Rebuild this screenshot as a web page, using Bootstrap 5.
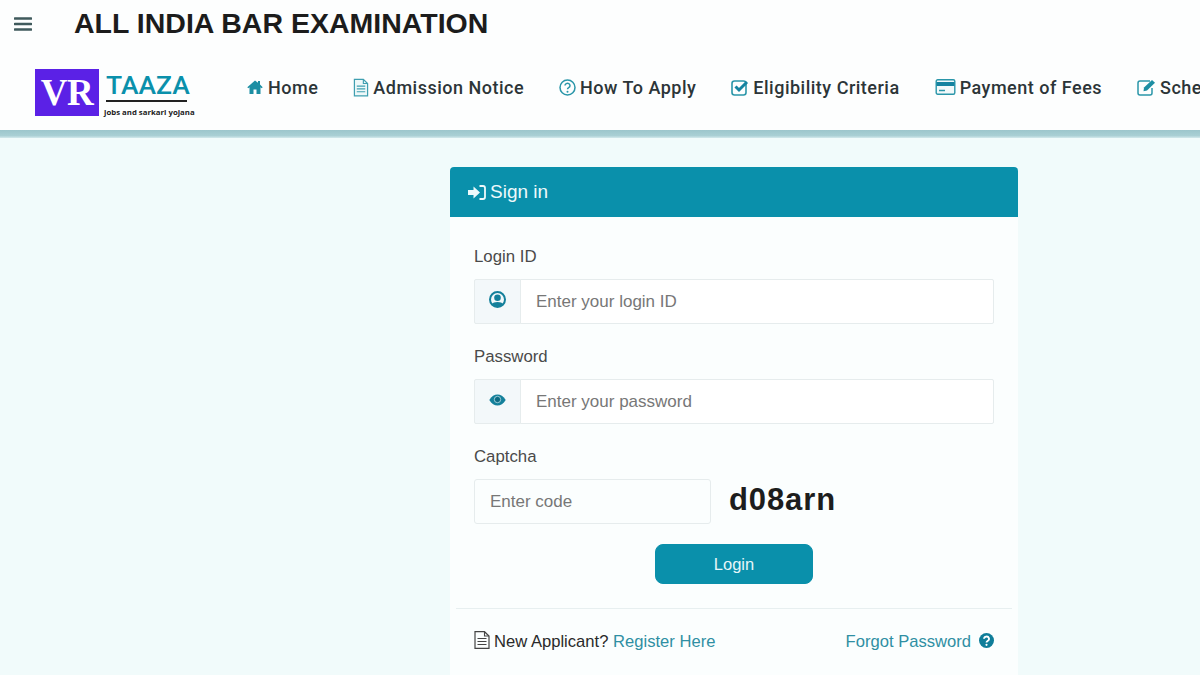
<!DOCTYPE html>
<html lang="en">
<head>
  <meta charset="UTF-8">
  <title>All India Bar Examination</title>
  <link href="https://cdn.jsdelivr.net/npm/bootstrap@5.3.3/dist/css/bootstrap.min.css" rel="stylesheet">
  <style>
    html, body { height: 675px; overflow: hidden; }
    body { background: #f1fbfb; font-family: "Liberation Sans", Arial, sans-serif; color: #444; }
    .top-strip { height: 60px; background: #fdfefe; padding-left: 14px; padding-bottom: 13px; }
    .menu-btn { width: 18px; margin-right: 42px; }
    .exam-title { font-size: 28.5px; font-weight: 700; color: #1c1c1c; margin: 0; line-height: 1; }
    .main-bar { height: 70px; background: #fdfefe; padding-left: 35px; white-space: nowrap; overflow: hidden; }
    .bar-edge { height: 8px; background: linear-gradient(#9cc6cc, #a9cfd4 70%, #d3e9ec); }
    .logo-box { width: 64px; height: 47px; background: #5b21e6; color: #fff; font-family: "Liberation Serif", serif; font-weight: 700; font-size: 37px; line-height: 47px; text-align: center; margin-bottom: 5px; letter-spacing: -.5px; }
    .logo-side { width: 148px; padding-left: 7px; }
    .logo-name { font-family: Roboto, sans-serif; font-size: 26.5px; font-weight: 500; color: #0a90ab; line-height: 26px; border-bottom: 2px solid #222; width: 81px; padding-bottom: 2px; }
    .logo-tag { font-family: "Open Sans", sans-serif; font-size: 7.8px; font-weight: 700; color: #222; margin-left: -2px; line-height: 12px; margin-top: 4px; }
    .main-links { gap: 35px; padding-bottom: 16px; }
    .main-item { font-family: Roboto, sans-serif; font-size: 18px; font-weight: 500; letter-spacing: .5px; color: #2c3538; text-decoration: none; flex: none; }
    .main-item svg { flex: none; }
    .home-icon { margin-right: 5px; }
    .signin-wrap { padding-left: 450px; padding-top: 29px; }
    .signin-box { width: 568px; height: 508px; overflow: hidden; background: #fbfefe; }
    .signin-head { height: 50px; background: #0a90ab; color: #eef9fb; font-size: 19px; padding-left: 18px; border-radius: 4px 4px 0 0; }
    .signin-body { padding: 29px 24px 0; }
    .field-label { font-size: 16.8px; line-height: 22px; color: #4a4a4a; margin-bottom: 11px; }
    .field-row { height: 45px; margin-bottom: 22px; }
    .field-row .input-group-text { width: 47px; justify-content: center; background: #f3f8fa; border-color: #e6eced; padding: 0; border-radius: 2px 0 0 2px; }
    .field-row .form-control, .code-input { font-size: 17px; color: #666; background: #fff; border-color: #e6eced; padding-left: 15px; box-shadow: none; }
    .field-row .form-control { border-radius: 0 2px 2px 0; }
    .form-control::placeholder { color: #777; opacity: 1; }
    .code-input { width: 237px; height: 45px; flex: none; border-radius: 3px; background: #fbfefe; }
    .code-text { font-size: 31px; line-height: 1; font-weight: 700; color: #1d1d1d; margin-left: 18px; letter-spacing: .9px; margin-bottom: 5px; }
    .login-btn { width: 158px; height: 40px; background: #0a90ab; border-color: #0a90ab; color: #e6f6f9; font-size: 16.5px; border-radius: 8px; margin-top: 20px; padding: 0; }
    .login-btn:hover { background: #0a90ab; border-color: #0a90ab; color: #e6f6f9; }
    .split-line { margin: 24px -18px 0; border-top: 1px solid #e7eff0; opacity: 1; }
    .foot-row { font-size: 16.6px; padding-top: 21px; }
    .foot-row a { color: #2f8fa3; text-decoration: none; }
    .new-text { color: #2a2a2a; }
  </style>
</head>
<body>
  <!-- top strip -->
  <div class="top-strip d-flex align-items-center">
    <svg class="menu-btn" height="16" viewBox="0 0 18 16"><path d="M1 2.5h16M1 8h16M1 13.5h16" stroke="#3f5a5c" stroke-width="2.6" stroke-linecap="round" fill="none"/></svg>
    <h1 class="exam-title">ALL INDIA BAR EXAMINATION</h1>
  </div>

  <!-- main menu -->
  <div class="main-bar d-flex align-items-center">
    <div class="logo-box flex-shrink-0">VR</div>
    <div class="logo-side flex-shrink-0">
      <div class="logo-name">TAAZA</div>
      <div class="logo-tag">jobs and sarkari yojana</div>
    </div>
    <div class="main-links d-flex align-items-center flex-shrink-0">
      <a class="main-item d-flex align-items-center" href="#">
        <svg width="16" height="14" viewBox="0 0 16 14" class="home-icon"><path d="M8 0.5 0.3 7.2l1 1L2.500 7.300V14h4V9.500h3V14h4V7.300l1.200.9 1-1L13 4.600V1h-2v1.800z" fill="#1c8ea3"/></svg>Home
      </a>
      <a class="main-item d-flex align-items-center" href="#">
        <svg width="16" height="19" viewBox="0 0 17 19" class="me-1"><path d="M1.500.8h9.500l4.500 4.500v13H1.500z" fill="#eef8f9" stroke="#3f9fb0" stroke-width="1.300"/><path d="M11 .8v4.500h4.500M4 8h9M4 11h9M4 14h9" stroke="#3f9fb0" stroke-width="1.200" fill="none"/></svg>Admission Notice
      </a>
      <a class="main-item d-flex align-items-center" href="#">
        <svg width="17" height="17" viewBox="0 0 17 17" class="me-1"><circle cx="8.500" cy="8.500" r="7.500" fill="none" stroke="#2a96a9" stroke-width="1.500"/><path d="M6 6.500a2.500 2.300 0 1 1 3.700 2.100c-.9.500-1.200.9-1.200 1.700" fill="none" stroke="#2a96a9" stroke-width="1.500"/><circle cx="8.500" cy="12.700" r="1" fill="#2a96a9"/></svg>How To Apply
      </a>
      <a class="main-item d-flex align-items-center" href="#">
        <svg width="18" height="17" viewBox="0 0 18 17" class="me-1"><rect x="1" y="2" width="14" height="14" rx="2.500" fill="none" stroke="#2a96a9" stroke-width="1.600"/><path d="M4.500 7.500 8 11l8-8" fill="none" stroke="#1583a0" stroke-width="3"/></svg>Eligibility Criteria
      </a>
      <a class="main-item d-flex align-items-center" href="#">
        <svg width="21" height="16" viewBox="0 0 20 16" class="me-1"><rect x=".7" y=".7" width="18.600" height="14.600" rx="1.500" fill="#f2f9fa" stroke="#2a96a9" stroke-width="1.400"/><rect x="1" y="3" width="18" height="4" fill="#1583a0"/><path d="M3.500 11.500h6" stroke="#2a96a9" stroke-width="1.500"/></svg>Payment of Fees
      </a>
      <a class="main-item d-flex align-items-center" href="#">
        <svg width="19" height="17" viewBox="0 0 19 17" class="me-1"><path d="M13 2H3a2 2 0 0 0-2 2v10a2 2 0 0 0 2 2h10a2 2 0 0 0 2-2V9" fill="none" stroke="#2a96a9" stroke-width="1.500"/><path d="m7 8.500 8-7.500 3 2.700-8 7.800-3.500.8z" fill="#1c8ea3"/></svg>Schedule
      </a>
    </div>
  </div>
  <div class="bar-edge"></div>

  <!-- sign in -->
  <div class="signin-wrap">
    <div class="signin-box">
      <div class="signin-head d-flex align-items-center">
        <svg width="18" height="15" viewBox="0 0 18 15" class="me-1"><path d="M0 5h5.500V1.500L12 7.500l-6.500 6V10H0z" fill="#eef9fb"/><path d="M11.500 1H15a2 2 0 0 1 2 2v9a2 2 0 0 1-2 2h-3.500" fill="none" stroke="#eef9fb" stroke-width="1.800"/></svg>
        <span>Sign in</span>
      </div>
      <form class="signin-body" onsubmit="return false">
        <div class="field-label">Login ID</div>
        <div class="input-group field-row">
          <span class="input-group-text">
            <svg width="17" height="17" viewBox="0 0 17 17" class="mb-1"><circle cx="8.500" cy="8.500" r="7.500" fill="none" stroke="#14809b" stroke-width="2"/><circle cx="8.500" cy="6.800" r="3.300" fill="#14809b"/><path d="M3 13c1-2.700 10-2.700 11 0l-2 2H5z" fill="#14809b"/></svg>
          </span>
          <input type="text" class="form-control" placeholder="Enter your login ID">
        </div>
        <div class="field-label">Password</div>
        <div class="input-group field-row">
          <span class="input-group-text">
            <svg width="17" height="12" viewBox="0 0 17 12" class="mb-1"><path d="M.3 6C2.500 2 5.500.5 8.500.5S14.500 2 16.700 6c-2.200 4-5.200 5.500-8.200 5.500S2.500 10 .3 6z" fill="#14809b"/><circle cx="8.500" cy="5.500" r="3.200" fill="#0b6a83" stroke="#bfe0e7" stroke-width=".8"/></svg>
          </span>
          <input type="password" class="form-control" placeholder="Enter your password">
        </div>
        <div class="field-label">Captcha</div>
        <div class="d-flex align-items-center">
          <input type="text" class="form-control code-input" placeholder="Enter code">
          <span class="code-text">d08arn</span>
        </div>
        <div class="text-center">
          <button type="submit" class="btn login-btn">Login</button>
        </div>
        <hr class="split-line">
        <div class="foot-row d-flex justify-content-between align-items-center">
          <div class="d-flex align-items-center">
            <svg width="16" height="18" viewBox="0 0 16 18" class="me-1 mb-1"><path d="M1 .7h9.500L15 5v12.300H1z" fill="#fbfefe" stroke="#444" stroke-width="1.200"/><path d="M10.500.7V5H15M3.500 7.500h9M3.500 10.500h9M3.500 13.500h9" stroke="#444" stroke-width="1.100" fill="none"/></svg>
            <span class="new-text">New Applicant?</span>&nbsp;<a href="#">Register Here</a>
          </div>
          <div class="d-flex align-items-center">
            <a href="#">Forgot Password</a>
            <svg width="15" height="15" viewBox="0 0 15 15" class="ms-2 mb-1"><circle cx="7.500" cy="7.500" r="7.500" fill="#0f7d99"/><path d="M5 5.800a2.500 2.300 0 1 1 3.600 2.100c-.8.500-1.100.8-1.100 1.500" fill="none" stroke="#fff" stroke-width="1.800"/><circle cx="7.500" cy="11.800" r="1.100" fill="#fff"/></svg>
          </div>
        </div>
      </form>
    </div>
  </div>

  <script src="https://cdn.jsdelivr.net/npm/bootstrap@5.3.3/dist/js/bootstrap.bundle.min.js"></script>
</body>
</html>
